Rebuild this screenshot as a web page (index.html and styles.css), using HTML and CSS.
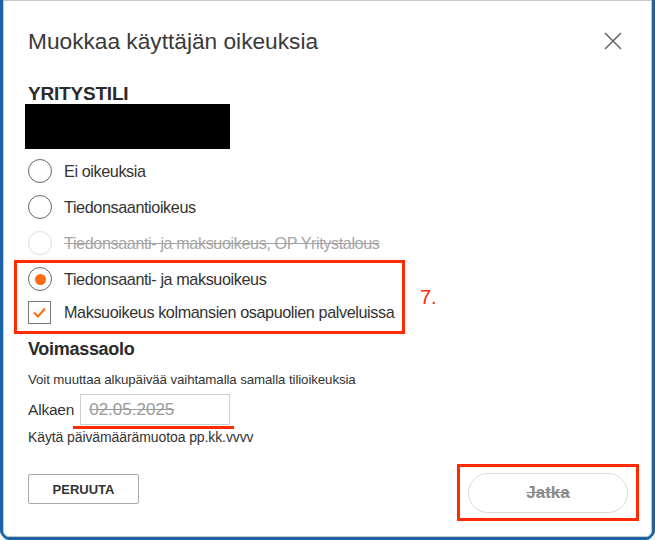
FILE: index.html
```html
<!DOCTYPE html>
<html>
<head>
  <meta charset="utf-8" />
  <title>Muokkaa käyttäjän oikeuksia</title>
  <link rel="stylesheet" href="styles.css">
</head>
<body>
  <div class="dialog">
    <div class="dialog-head">
      <h2 class="title">Muokkaa käyttäjän oikeuksia</h2>
      <button type="button" class="close" aria-label="Sulje">
        <svg width="18" height="18" viewBox="0 0 18 18">
          <path d="M1 1 L17 17 M17 1 L1 17" stroke="#666" stroke-width="1.6" fill="none" />
        </svg>
      </button>
    </div>

    <div class="account">
      <div class="account-label">YRITYSTILI</div>
      <div class="redacted"></div>
    </div>

    <ul class="options">
      <li class="opt"><span class="radio"></span>Ei oikeuksia</li>
      <li class="opt"><span class="radio"></span>Tiedonsaantioikeus</li>
      <li class="opt disabled"><span class="radio"></span><span class="struck">Tiedonsaanti- ja maksuoikeus, OP Yritystalous</span></li>
      <li class="opt"><span class="radio checked"></span>Tiedonsaanti- ja maksuoikeus</li>
      <li class="opt opt-check">
        <span class="checkbox">
          <svg width="21" height="21" viewBox="0 0 21 21">
            <path d="M5 10.5 L9 14.5 L16 6.5" stroke="#ff6a10" stroke-width="2" fill="none" />
          </svg>
        </span>Maksuoikeus kolmansien osapuolien palveluissa
      </li>
    </ul>

    <div class="validity">
      <h3 class="validity-title">Voimassaolo</h3>
      <p class="hint">Voit muuttaa alkupäivää vaihtamalla samalla tilioikeuksia</p>
      <div class="date-row">
        <label class="date-label">Alkaen</label>
        <div class="date-input"><span class="struck">02.05.2025</span></div>
      </div>
      <p class="hint hint-format">Käytä päivämäärämuotoa pp.kk.vvvv</p>
    </div>

    <div class="actions">
      <button type="button" class="btn-cancel">PERUUTA</button>
      <button type="button" class="btn-next">Jatka</button>
    </div>

    <!-- annotations -->
    <div class="mark mark-options"></div>
    <div class="mark-num">7.</div>
    <div class="mark-underline"></div>
    <div class="mark mark-next"></div>
  </div>
</body>
</html>
```

FILE: styles.css
```css
html, body {
  margin: 0;
  height: 540px;
  overflow: hidden;
}
body {
  background: #f4f4f4;
  font-family: "Liberation Sans", Arial, sans-serif;
  color: #333;
}
.dialog {
  position: relative;
  box-sizing: border-box;
  margin-left: 3px;
  width: 649px;
  height: 537px;
  background: #fff;
  border: 1px solid #c9c9c9;
  border-radius: 0 0 6px 6px;
  padding: 0 23px 0 24px;
  box-shadow: -3px 0 0 #1c62a6, 3px 0 0 #1c62a6, 0 2px 0 1px #1c62a6;
}
.dialog-head {
  display: flex;
  justify-content: space-between;
  align-items: center;
  padding-top: 28px;
  padding-right: 6px;
}
.title {
  margin: 0;
  font-weight: normal;
  font-size: 22.7px;
  line-height: 24px;
  color: #3a3a3a;
}
.close {
  border: none;
  background: none;
  padding: 0;
  width: 18px;
  height: 18px;
  cursor: pointer;
  display: flex;
}
.account {
  margin-top: 31px;
}
.account-label {
  font-size: 19px;
  font-weight: bold;
  line-height: 20px;
  letter-spacing: -0.2px;
  color: #2b2b2b;
}
.redacted {
  width: 205px;
  height: 45px;
  margin-left: -3px;
  background: #000;
}
.options {
  list-style: none;
  margin: 4px 0 0;
  padding: 0;
}
.opt {
  display: flex;
  align-items: center;
  height: 36px;
  font-size: 16.2px;
  letter-spacing: -0.4px;
  color: #333;
}
.opt-check {
  height: 30px;
}
.radio {
  box-sizing: border-box;
  width: 24px;
  height: 24px;
  border: 1px solid #666;
  border-radius: 50%;
  margin-right: 12px;
  display: flex;
  align-items: center;
  justify-content: center;
  flex-shrink: 0;
}
.radio.checked::after {
  content: "";
  width: 11px;
  height: 11px;
  border-radius: 50%;
  background: #ff6a10;
}
.disabled {
  color: #a5a5a5;
}
.disabled .radio {
  border-color: #dcdcdc;
}
.struck {
  text-decoration: line-through;
}
.checkbox {
  box-sizing: border-box;
  width: 23px;
  height: 23px;
  border: 1px solid #777;
  margin-right: 13px;
  display: flex;
  flex-shrink: 0;
}
.validity {
  margin-top: 12px;
}
.validity-title {
  margin: 0;
  font-size: 18px;
  font-weight: bold;
  line-height: 20px;
  letter-spacing: -0.3px;
  color: #2b2b2b;
}
.hint {
  margin: 12px 0 0;
  font-size: 13.3px;
  line-height: 18px;
  letter-spacing: -0.1px;
  color: #333;
}
.date-row {
  display: flex;
  align-items: center;
  margin-top: 5px;
}
.date-label {
  font-size: 15.5px;
  letter-spacing: -0.2px;
  margin-right: 6px;
}
.date-input {
  box-sizing: border-box;
  width: 150px;
  height: 31px;
  border: 1px solid #d0d0d0;
  padding-left: 8px;
  display: flex;
  align-items: center;
  font-size: 17px;
  color: #9a9a9a;
}
.hint-format {
  margin-top: 3px;
  font-size: 14px;
}
.actions {
  display: flex;
  justify-content: space-between;
  align-items: flex-start;
  margin-top: 27px;
}
.btn-cancel {
  box-sizing: border-box;
  margin-top: 1px;
  width: 111px;
  height: 30px;
  border: 1px solid #a9a9a9;
  border-radius: 2px;
  background: #fff;
  font-family: "Liberation Sans", Arial, sans-serif;
  font-size: 13px;
  font-weight: bold;
  color: #333;
  cursor: pointer;
}
.btn-next {
  box-sizing: border-box;
  width: 160px;
  height: 40px;
  border: 1px solid #dadada;
  border-radius: 20px;
  background: #fff;
  font-family: "Liberation Sans", Arial, sans-serif;
  font-size: 17px;
  font-weight: bold;
  color: #8a8a8a;
  text-decoration: line-through;
  cursor: pointer;
}

/* red annotation overlays */
.mark {
  position: absolute;
  box-sizing: border-box;
  border: 3px solid #ff2a00;
}
.mark-options {
  left: 10px;
  top: 259px;
  width: 391px;
  height: 74px;
}
.mark-num {
  position: absolute;
  left: 416px;
  top: 285px;
  font-size: 20px;
  color: #ff2a00;
}
.mark-underline {
  position: absolute;
  left: 69px;
  top: 425px;
  width: 161px;
  height: 3px;
  background: #ff2a00;
}
.mark-next {
  left: 453px;
  top: 463px;
  width: 182px;
  height: 57px;
}
```
